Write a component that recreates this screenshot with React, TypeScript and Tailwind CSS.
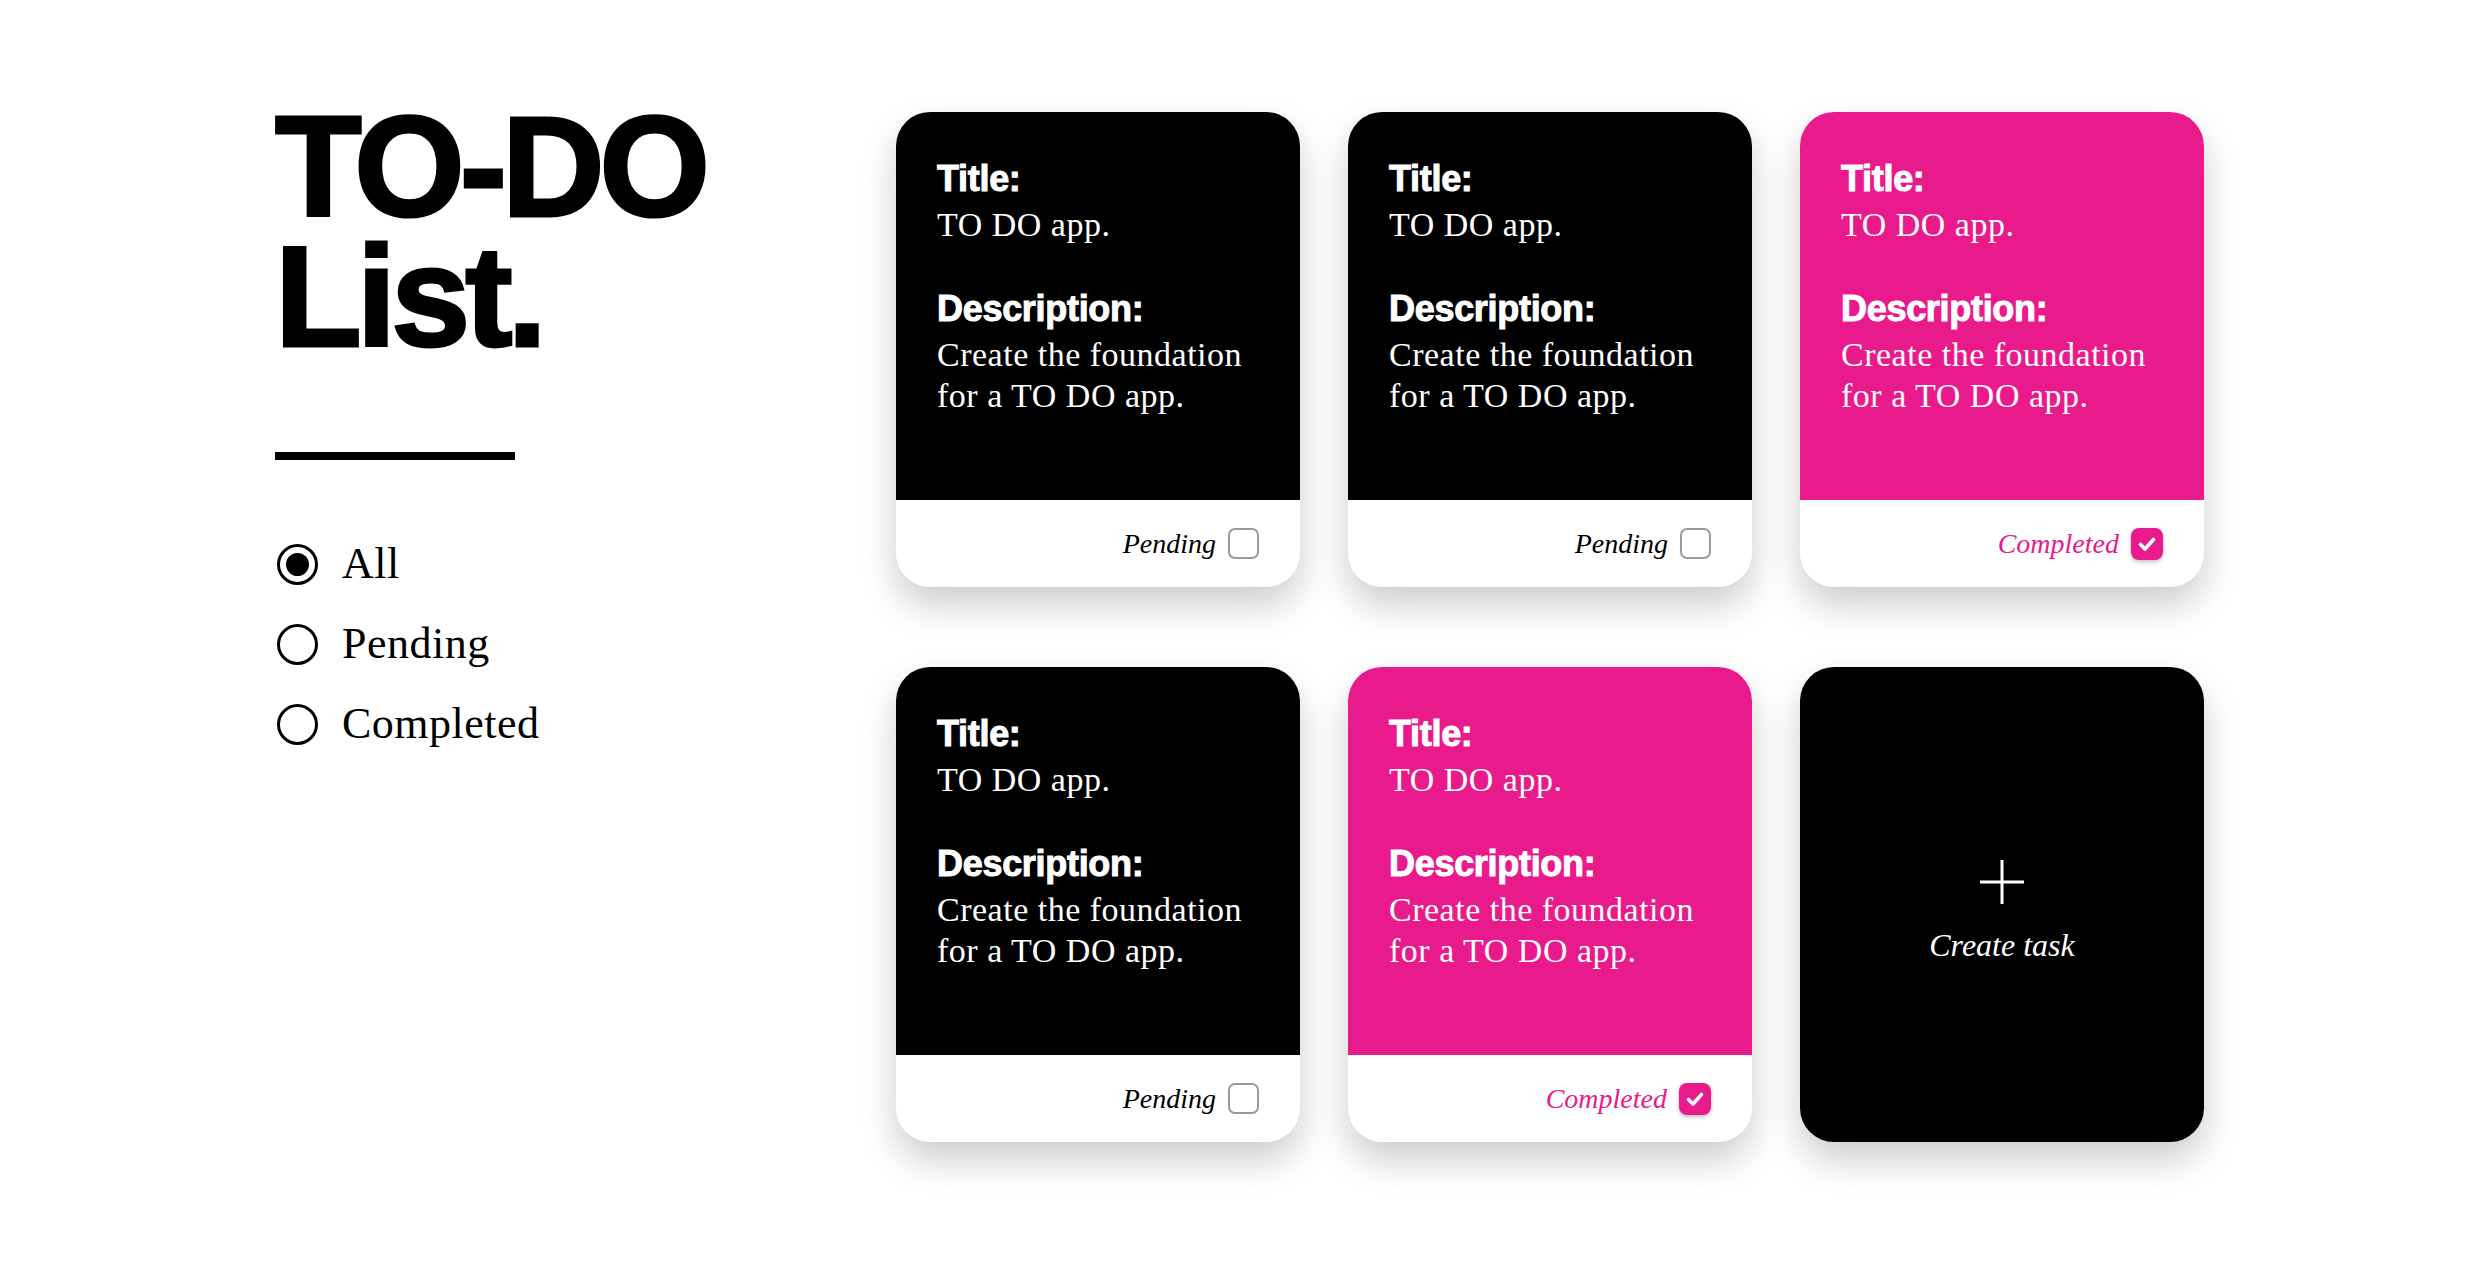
import React from "react";

interface Task {
  title: string;
  description: string;
  completed: boolean;
}

const tasks: Task[] = [
  { title: "TO DO app.", description: "Create the foundation for a TO DO app.", completed: false },
  { title: "TO DO app.", description: "Create the foundation for a TO DO app.", completed: false },
  { title: "TO DO app.", description: "Create the foundation for a TO DO app.", completed: true },
  { title: "TO DO app.", description: "Create the foundation for a TO DO app.", completed: false },
  { title: "TO DO app.", description: "Create the foundation for a TO DO app.", completed: true },
];

const filters = ["All", "Pending", "Completed"];

function TaskCard({ task }: { task: Task }) {
  return (
    <div className="h-[475px] rounded-[34px] overflow-hidden bg-white flex flex-col shadow-[0_18px_36px_rgba(0,0,0,0.2)]">
      {/* Body */}
      <div
        className={`h-[388px] pl-[41px] pr-[30px] pt-[49px] text-white ${
          task.completed ? "bg-[#e91a8b]" : "bg-black"
        }`}
      >
        <h3 className="font-['Liberation_Sans',Arial,sans-serif] font-bold text-[36px] leading-[36px] tracking-[-0.3px] [-webkit-text-stroke:1px_white]">
          Title:
        </h3>
        <p className="mt-[7px] font-['Liberation_Serif','Times_New_Roman',serif] text-[34px] leading-[41px] tracking-[0.5px]">
          {task.title}
        </p>
        <h3 className="mt-[46px] font-['Liberation_Sans',Arial,sans-serif] font-bold text-[36px] leading-[36px] tracking-[-0.3px] [-webkit-text-stroke:1px_white]">
          Description:
        </h3>
        <p className="mt-[7px] font-['Liberation_Serif','Times_New_Roman',serif] text-[34px] leading-[41px] tracking-[0.5px]">
          {task.description}
        </p>
      </div>

      {/* Footer */}
      <div className="flex-1 flex items-center justify-end gap-[12px] pr-[41px]">
        {task.completed ? (
          <>
            <span className="font-['Liberation_Serif','Times_New_Roman',serif] italic text-[28px] text-[#e91a8b]">
              Completed
            </span>
            <span className="w-[32px] h-[32px] rounded-[8px] bg-[#e91a8b] flex items-center justify-center shadow-[0_2px_4px_rgba(0,0,0,0.25)]">
              <svg width="22" height="22" viewBox="0 0 22 22" fill="none">
                <path
                  d="M4.5 11.5l4.5 4.5 8.5-9.5"
                  stroke="white"
                  strokeWidth="3.6"
                  strokeLinecap="round"
                  strokeLinejoin="round"
                />
              </svg>
            </span>
          </>
        ) : (
          <>
            <span className="font-['Liberation_Serif','Times_New_Roman',serif] italic text-[28px] text-black">
              Pending
            </span>
            <span className="w-[31px] h-[31px] rounded-[7px] border-2 border-[#9a9a9a] bg-white" />
          </>
        )}
      </div>
    </div>
  );
}

function CreateCard() {
  return (
    <div className="h-[475px] rounded-[34px] bg-black flex flex-col items-center justify-center pt-[12px] shadow-[0_18px_36px_rgba(0,0,0,0.2)]">
      <svg width="44" height="44" viewBox="0 0 44 44">
        <path d="M22 0v44M0 22h44" stroke="white" strokeWidth="3" />
      </svg>
      <span className="mt-[25px] font-['Liberation_Serif','Times_New_Roman',serif] italic text-[32px] leading-[32px] text-white">
        Create task
      </span>
    </div>
  );
}

export default function App() {
  return (
    <div className="min-h-screen bg-white flex items-start pl-[275px] pt-[102px]">
      {/* Sidebar */}
      <div className="w-[621px] shrink-0">
        <h1 className="font-['Liberation_Sans',Arial,sans-serif] font-bold text-[142px] leading-[130px] tracking-[-0.035em] text-black [-webkit-text-stroke:3px_black]">
          <span className="block h-[130px]">TO-DO</span>
          <span className="block h-[130px]">List.</span>
        </h1>

        <div className="mt-[90px] w-[240px] h-2 bg-black" />

        <div className="mt-[64px] flex flex-col">
          {filters.map((f, i) => (
            <label key={f} className="h-[80px] flex items-center gap-[24px] ml-[2px]">
              <span className="w-[41px] h-[41px] rounded-full border-[3px] border-black flex items-center justify-center">
                {i === 0 && <span className="w-[23px] h-[23px] rounded-full bg-black" />}
              </span>
              <span className="font-['Liberation_Serif','Times_New_Roman',serif] text-[44px] leading-none tracking-[0.5px] text-black">
                {f}
              </span>
            </label>
          ))}
        </div>
      </div>

      {/* Task grid */}
      <div className="mt-[10px] grid grid-cols-[repeat(3,404px)] gap-x-[48px] gap-y-[80px]">
        {tasks.map((t, i) => (
          <TaskCard key={i} task={t} />
        ))}
        <CreateCard />
      </div>
    </div>
  );
}
